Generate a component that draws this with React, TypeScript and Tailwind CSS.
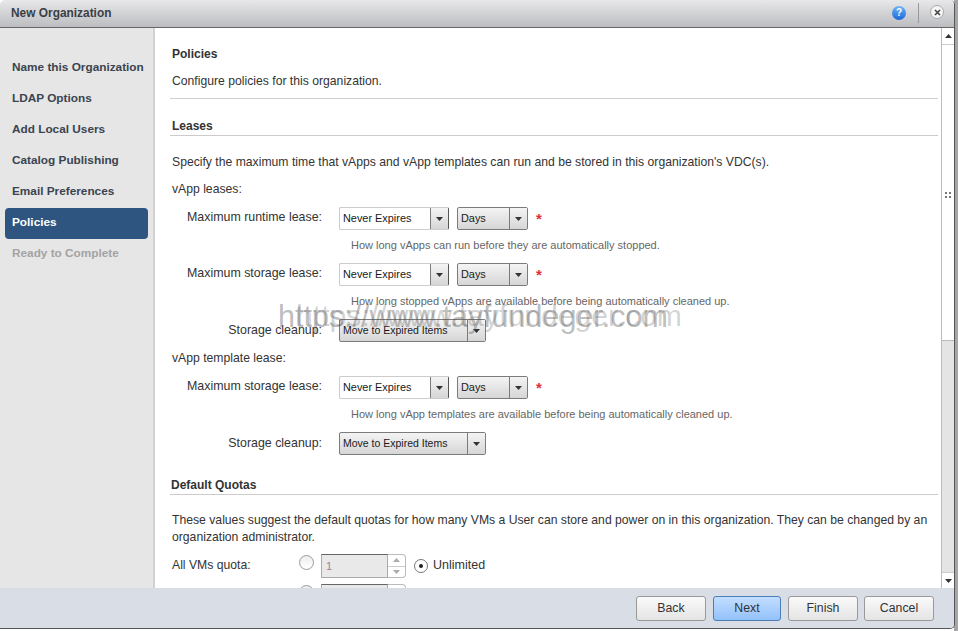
const NAV = [
  { label: 'Name this Organization' },
  { label: 'LDAP Options' },
  { label: 'Add Local Users' },
  { label: 'Catalog Publishing' },
  { label: 'Email Preferences' },
  { label: 'Policies', active: true },
  { label: 'Ready to Complete', disabled: true },
];

function Caret() {
  return (
    <svg width={7} height={4} viewBox="0 0 9 5" preserveAspectRatio="none" className="block">
      <path d="M0 0h9L4.5 5z" fill="#333" />
    </svg>
  );
}

function Select({ value, width, bordered, size = 'text-[10.900px]' }: { value: string; width: string; bordered?: boolean; size?: string }) {
  return (
    <div className={`flex h-[23px] rounded-[2px] border border-[#7b7b7b] text-[#1a1a1a] ${size} ${width} ${bordered ? 'bg-white border-l-[#ccc] border-t-[#ccc] border-b-[#ccc] border-r-[#555]' : 'bg-gradient-to-b from-[#f4f4f4] to-[#d6d6d6]'}`}>
      <span className="flex-1 pl-[3px] leading-[20px] whitespace-nowrap overflow-hidden">{value}</span>
      <span className="w-[18px] flex items-center justify-center border-l border-[#7b7b7b] bg-gradient-to-b from-[#f4f4f4] to-[#d6d6d6]">
        <Caret />
      </span>
    </div>
  );
}

function LeaseRow({ label, top }: { label: string; top: string }) {
  return (
    <div className={`flex items-center h-[23px] ${top}`}>
      <span className="w-[150px] text-right text-[12.400px] text-[#333] -mt-[3px]">{label}</span>
      <div className="ml-[17px] flex items-center">
        <Select value="Never Expires" width="w-[110px]" bordered />
        <div className="ml-[8px]">
          <Select value="Days" width="w-[71px]" />
        </div>
        <span className="ml-[8px] text-[#e03040] text-[15px] font-bold leading-none -mt-[1px]">*</span>
      </div>
    </div>
  );
}

function Hint({ text, top }: { text: string; top: string }) {
  return <div className={`pl-[179px] h-[14px] text-[11px] leading-[14px] text-[#666] ${top}`}>{text}</div>;
}

function CleanupRow({ top }: { top: string }) {
  return (
    <div className={`flex items-center h-[23px] ${top}`}>
      <span className="w-[150px] text-right text-[12.400px] text-[#333]">Storage cleanup:</span>
      <div className="ml-[17px]">
        <Select value="Move to Expired Items" width="w-[147px]" size="text-[10.500px]" />
      </div>
    </div>
  );
}

function QuotaRow({ label, top, unlimited }: { label?: string; top: string; unlimited?: boolean }) {
  return (
    <div className={`flex items-center h-[23px] ${top}`}>
      <span className="w-[127px] text-[#333]">{label}</span>
      <span className="w-[15px] h-[15px] rounded-full border border-[#999] bg-gradient-to-b from-[#eee] to-white -mt-[7px]" />
      <div className="ml-[7px] flex h-[24px] mt-[1px]">
        <div className="w-[67px] border border-[#aaa] border-t-[#666] bg-[#e9e9e9] pl-[4px] text-[11px] text-[#9a7fa0] leading-[22px]">1</div>
        <div className="w-[18px] flex flex-col items-center border border-l-0 border-[#bbb] rounded-r-[4px]">
          <span className="flex-1 w-full flex items-center justify-center border-b border-[#ccc]">
            <svg width="7" height="4" viewBox="0 0 7 4"><path d="M0 4h7L3.500 0z" fill="#aaa" /></svg>
          </span>
          <span className="flex-1 flex items-center justify-center">
            <svg width="7" height="4" viewBox="0 0 7 4"><path d="M0 0h7L3.500 4z" fill="#aaa" /></svg>
          </span>
        </div>
      </div>
      {unlimited && (
        <div className="ml-[8px] flex items-center">
          <span className="w-[14px] h-[14px] rounded-full border border-[#777] bg-white flex items-center justify-center">
            <span className="w-[4px] h-[4px] rounded-full bg-[#222]" />
          </span>
          <span className="ml-[5px] text-[12.500px] text-[#333]">Unlimited</span>
        </div>
      )}
    </div>
  );
}

function FooterButton({ label, primary }: { label: string; primary?: boolean }) {
  return (
    <button
      className={`h-[25px] rounded-[3px] border text-[12.300px] text-[#333] ${primary ? 'w-[68px] border-[#4a7fb5] bg-gradient-to-b from-[#c3deff] to-[#93c1fb]' : 'w-[70px] border-[#999] bg-gradient-to-b from-[#fafafa] to-[#e4e4e4]'}`}
    >
      {label}
    </button>
  );
}

export default function App() {
  return (
    <div className="relative w-[958px] h-[631px] bg-white overflow-hidden font-['Liberation_Sans',Arial,sans-serif] text-[12px]">
      <div className="absolute left-[954px] top-0 w-[4px] h-[631px] bg-[#a6a6a6]" />
      <div className="relative flex flex-col w-[955px] h-[629px] border-r border-b border-[#555] rounded-t-[5px] rounded-br-[5px] overflow-hidden">
        <header className="flex items-center h-[28px] shrink-0 border-b border-[#666] bg-gradient-to-b from-[#e8e8ea] to-[#bcbdc0] pl-[11px] pr-[10px]">
          <span className="font-bold text-[11.900px] text-[#3a3f45]">New Organization</span>
          <span className="ml-auto flex items-center -mt-[1px]">
            <span className="w-[14px] h-[14px] rounded-full bg-gradient-to-b from-[#6fb3f8] to-[#1a66d8] text-white text-[10px] font-bold leading-[14px] text-center">?</span>
            <span className="ml-[12px] w-px h-[20px] bg-[#999]" />
            <span className="ml-[11px] w-[14px] h-[14px] rounded-full border border-[#aaa] bg-[#f4f4f4] flex items-center justify-center -mt-[2px]">
              <svg width="7" height="7" viewBox="0 0 7 7"><path d="M1 1l5 5M6 1l-5 5" stroke="#444" strokeWidth="1.600" /></svg>
            </span>
          </span>
        </header>

        <div className="flex flex-1 min-h-0">
          <nav className="w-[155px] shrink-0 bg-[#e6e6e6] border-r-2 border-[#d2d2d2] pt-[25px] pl-[5px] pr-[5px]">
            {NAV.map(item => (
              <div
                key={item.label}
                className={`h-[31px] pl-[7px] font-bold text-[11.800px] leading-[29px] whitespace-nowrap rounded-[4px] ${item.active ? 'bg-[#2d5580] text-white' : item.disabled ? 'text-[#a3a3a3]' : 'text-[#3a4450]'}`}
              >
                {item.label}
              </div>
            ))}
          </nav>

          <main className="flex-1 min-w-0 overflow-hidden bg-white pl-[15px] pr-[3px] text-[12.200px] text-[#333]">
            <div className="pl-[2px] h-[14px] mt-[19px] leading-[14px] text-[12px] font-bold">Policies</div>
            <div className="pl-[2px] h-[14px] mt-[13px] leading-[14px]">Configure policies for this organization.</div>
            <div className="h-[11px] border-b border-[#ccd2d2] mb-[20px]" />
            <div className="pl-[2px] h-[14px] leading-[14px] text-[12px] font-bold">Leases</div>
            <div className="mt-[2px] h-px bg-[#ccc]" />
            <div className="pl-[2px] h-[14px] mt-[19px] leading-[14px]">Specify the maximum time that vApps and vApp templates can run and be stored in this organization's VDC(s).</div>
            <div className="pl-[2px] h-[14px] mt-[13px] leading-[14px]">vApp leases:</div>
            <div className="pl-[2px]">
              <LeaseRow label="Maximum runtime lease:" top="mt-[11px]" />
              <Hint text="How long vApps can run before they are automatically stopped." top="mt-[8px]" />
              <LeaseRow label="Maximum storage lease:" top="mt-[11px]" />
              <Hint text="How long stopped vApps are available before being automatically cleaned up." top="mt-[8px]" />
              <CleanupRow top="mt-[11px]" />
            </div>
            <div className="pl-[2px] h-[14px] mt-[9px] leading-[14px]">vApp template lease:</div>
            <div className="pl-[2px]">
              <LeaseRow label="Maximum storage lease:" top="mt-[11px]" />
              <Hint text="How long vApp templates are available before being automatically cleaned up." top="mt-[8px]" />
              <CleanupRow top="mt-[11px]" />
            </div>
            <div className="pl-[1px] h-[14px] mt-[23px] leading-[14px] text-[12px] font-bold">Default Quotas</div>
            <div className="mt-[2px] h-px bg-[#ccc]" />
            <div className="pl-[2px] mt-[17px] leading-[17px] w-[770px]">
              These values suggest the default quotas for how many VMs a User can store and power on in this organization. They can be changed by an organization administrator.
            </div>
            <div className="pl-[2px]">
              <QuotaRow label="All VMs quota:" top="mt-[8px]" unlimited />
              <QuotaRow top="mt-[7px]" />
            </div>
          </main>

          <div className="w-[13px] shrink-0 flex flex-col border-l border-[#bbb] bg-[#e4e4e4]">
            <div className="h-[17px] bg-white border-b border-[#ccc] flex items-center justify-center">
              <svg width="7" height="4" viewBox="0 0 7 4" className="block"><path d="M0 4h7L3.500 0z" fill="#333" /></svg>
            </div>
            <div className="h-[296px] bg-white border-b border-[#bbb]" />
            <div className="flex-1" />
            <div className="h-[16px] bg-white border-t border-[#ccc] flex items-center justify-center">
              <Caret />
            </div>
          </div>
        </div>

        <footer className="flex items-center justify-end gap-[6px] h-[40px] shrink-0 bg-[#d9dde6] pr-[20px]">
          <div className="mr-[1px]"><FooterButton label="Back" /></div>
          <FooterButton label="Next" primary />
          <div className="ml-[1px]"><FooterButton label="Finish" /></div>
          <FooterButton label="Cancel" />
        </footer>
      </div>

      <div className="absolute left-[945px] top-[192px] grid grid-cols-2 gap-[2px]">
        <span className="w-[2px] h-[2px] bg-[#777]" /><span className="w-[2px] h-[2px] bg-[#777]" />
        <span className="w-[2px] h-[2px] bg-[#777]" /><span className="w-[2px] h-[2px] bg-[#777]" />
      </div>

      <div className="absolute left-[278px] top-[299px] text-[30.500px] leading-[34px] text-[#555]/40 whitespace-nowrap pointer-events-none">https://www.tayfundeger.com</div>
      <div className="absolute left-[296px] top-[299px] text-[30.200px] leading-[34px] text-[#555]/25 whitespace-nowrap pointer-events-none">https://www.tayfundeger.com</div>
    </div>
  );
}
